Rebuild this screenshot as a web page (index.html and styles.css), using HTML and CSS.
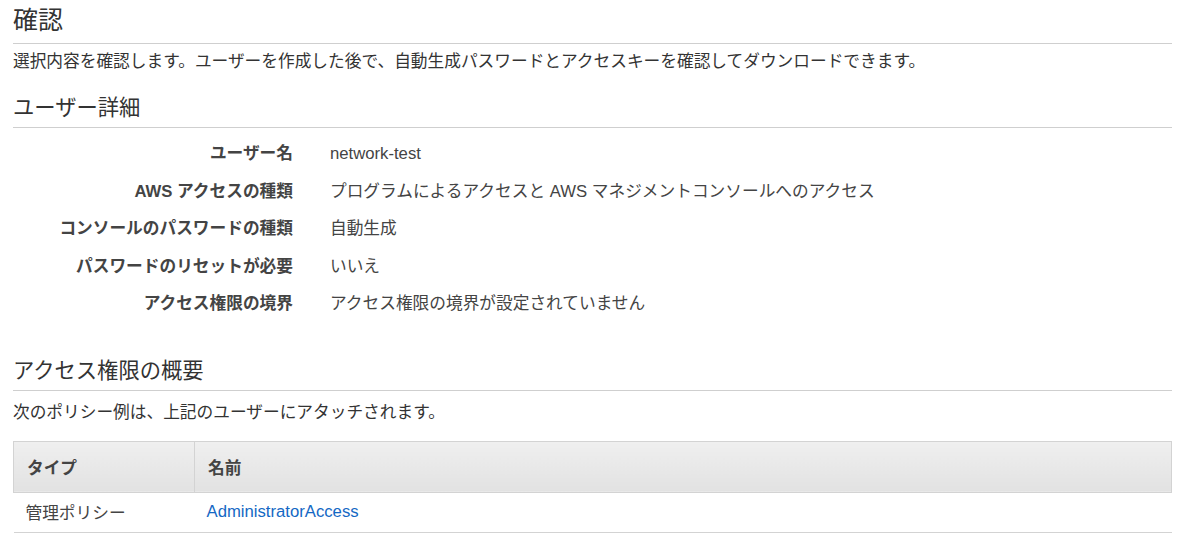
FILE: index.html
```html
<!DOCTYPE html>
<html lang="ja">
<head>
<meta charset="utf-8">
<title>確認</title>
<link rel="stylesheet" href="styles.css">
</head>
<body>
<main class="page">
  <h1 class="page-title">確認</h1>
  <p class="desc">選択内容を確認します。ユーザーを作成した後で、自動生成パスワードとアクセスキーを確認してダウンロードできます。</p>

  <h2 class="section-title">ユーザー詳細</h2>
  <dl class="details">
    <dt>ユーザー名</dt><dd>network-test</dd>
    <dt>AWS アクセスの種類</dt><dd>プログラムによるアクセスと AWS マネジメントコンソールへのアクセス</dd>
    <dt>コンソールのパスワードの種類</dt><dd>自動生成</dd>
    <dt>パスワードのリセットが必要</dt><dd>いいえ</dd>
    <dt>アクセス権限の境界</dt><dd>アクセス権限の境界が設定されていません</dd>
  </dl>

  <h2 class="section-title section-gap">アクセス権限の概要</h2>
  <p class="note">次のポリシー例は、上記のユーザーにアタッチされます。</p>

  <table class="policies">
    <thead>
      <tr><th class="col-type">タイプ</th><th>名前</th></tr>
    </thead>
    <tbody>
      <tr><td>管理ポリシー</td><td><a class="link" href="#">AdministratorAccess</a></td></tr>
    </tbody>
  </table>
</main>
</body>
</html>
```

FILE: styles.css
```css
html, body {
  margin: 0;
  padding: 0;
  background: #fff;
}

body {
  font-family: "Liberation Sans", "Noto Sans CJK JP", sans-serif;
  color: #444;
  font-size: 16.7px;
}

.page {
  padding: 0 28px 0 13px;
}

.page-title {
  margin: 0;
  font-size: 25px;
  font-weight: normal;
  color: #333;
  line-height: 40px;
  padding-bottom: 3px;
  border-bottom: 1px solid #cfcfcf;
}

.desc {
  margin: 6px 0 0;
  line-height: 24px;
  color: #333;
}

.section-title {
  margin: 19px 0 0;
  font-size: 21.3px;
  font-weight: normal;
  color: #333;
  line-height: 30px;
  padding-bottom: 4px;
  border-bottom: 1px solid #cfcfcf;
}

.section-gap {
  margin-top: 33px;
}

.details {
  margin: 7px 0 0;
  display: grid;
  grid-template-columns: 280px 1fr;
  column-gap: 37px;
}

.details dt,
.details dd {
  margin: 0;
  line-height: 37.5px;
}

.details dt {
  text-align: right;
  font-weight: bold;
  color: #444;
}

.details dd {
  color: #444;
}

.note {
  margin: 10px 0 0;
  line-height: 24px;
  color: #333;
}

.policies {
  margin-top: 16px;
  width: 100%;
  border-collapse: collapse;
  font-size: 16.7px;
}

.policies th {
  text-align: left;
  font-weight: bold;
  color: #444;
  height: 50px;
  padding: 0 13px;
  background: linear-gradient(#efefef, #e2e2e2);
  border: 1px solid #d3d3d3;
}

.policies th.col-type {
  width: 154px;
}

.policies td {
  height: 39px;
  padding: 0 12px;
  border-bottom: 1px solid #d3d3d3;
  color: #444;
}

.link {
  color: #1468c4;
  text-decoration: none;
}
```
